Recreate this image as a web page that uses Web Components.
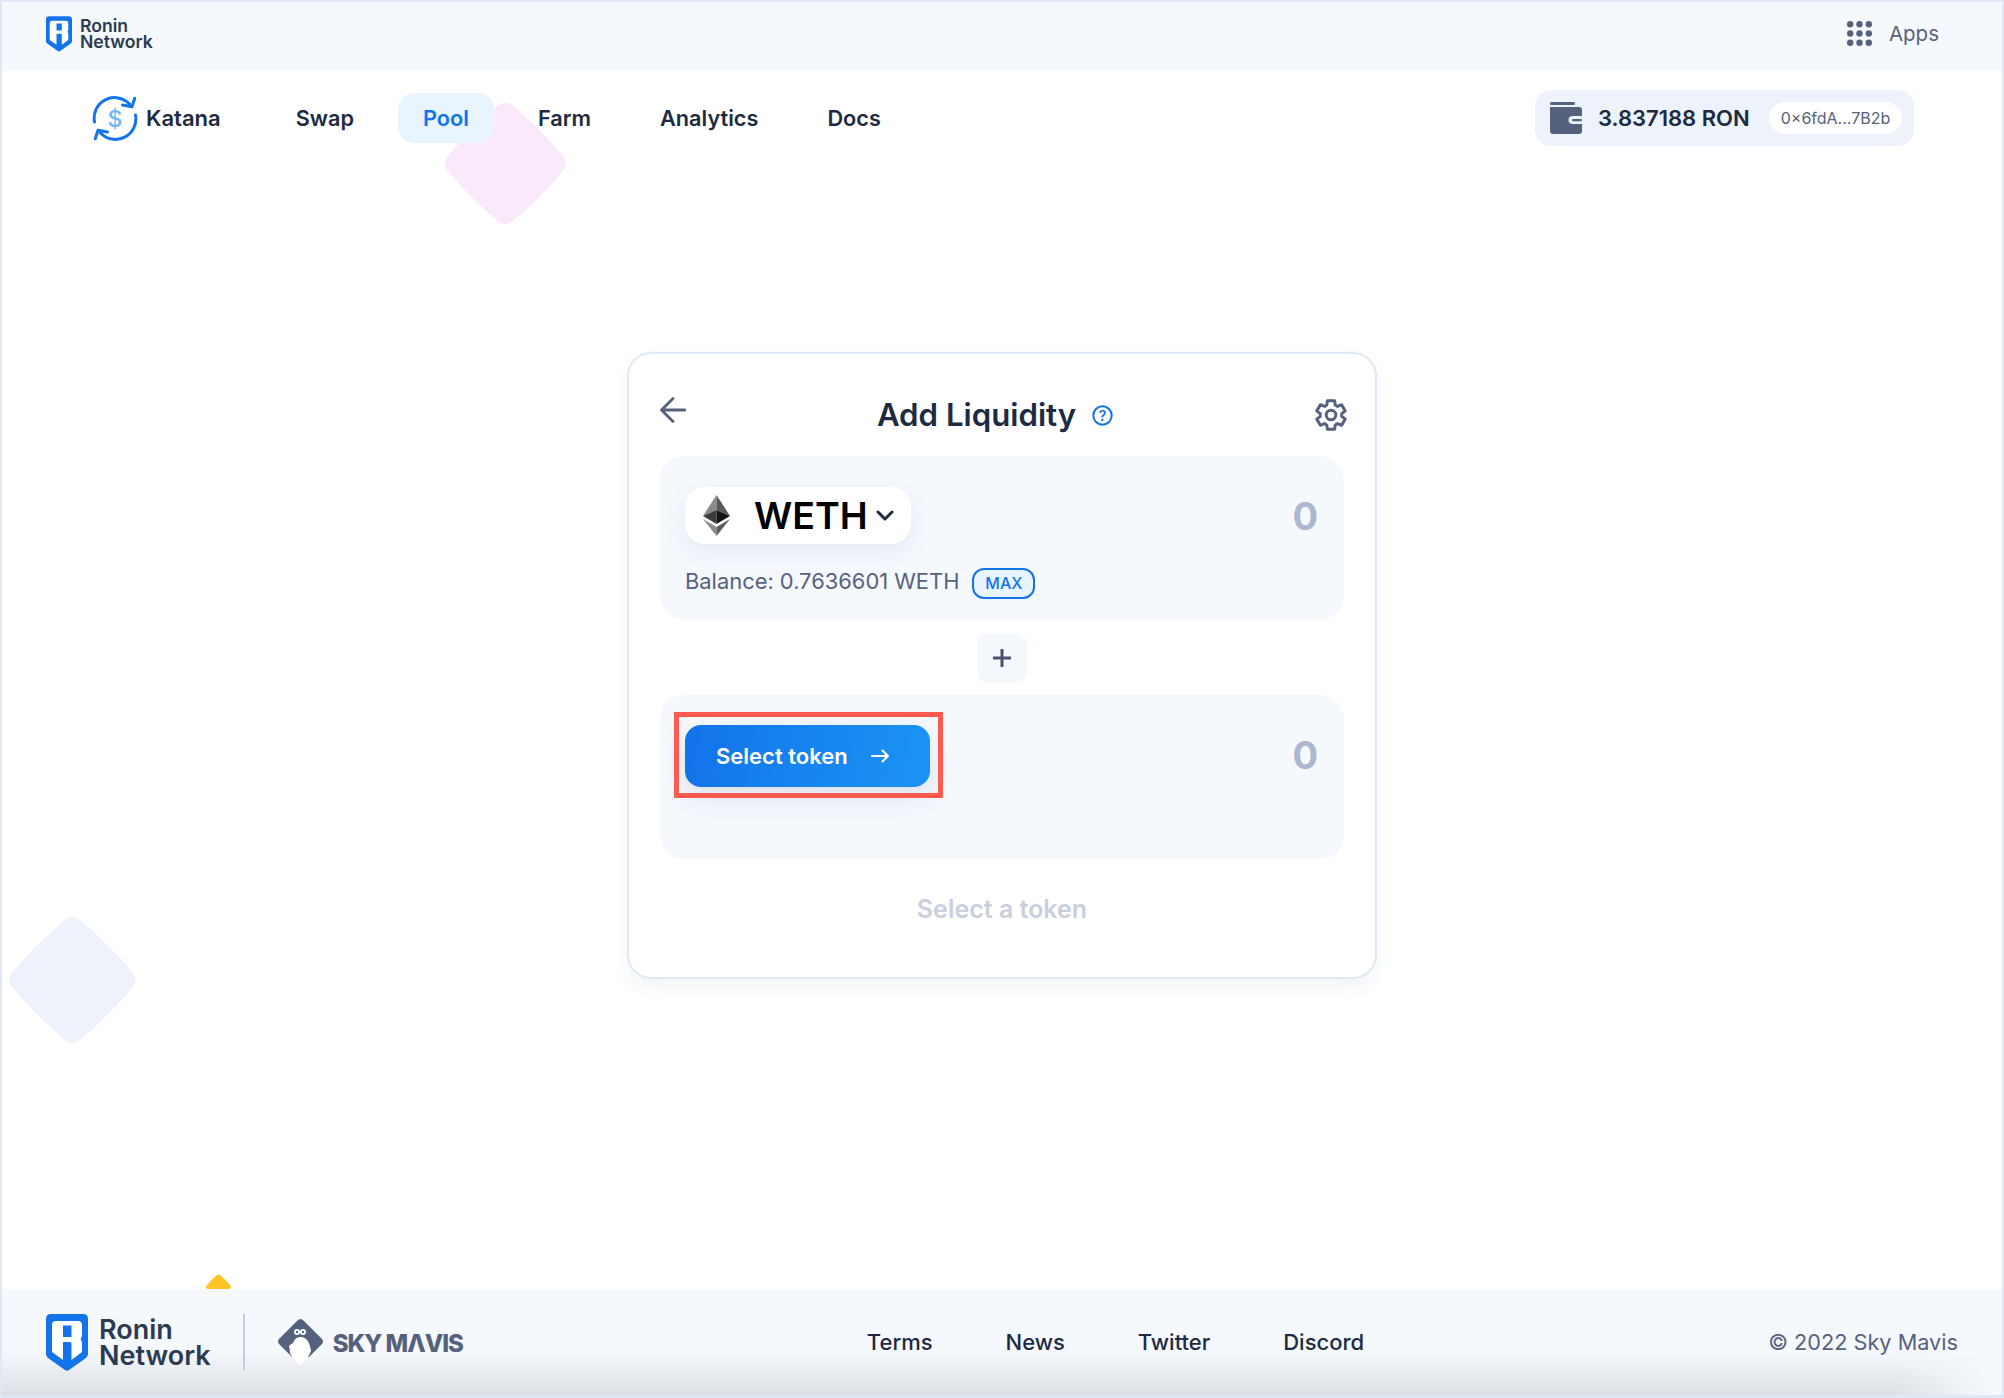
<!DOCTYPE html>
<html lang="en">
<head>
<meta charset="utf-8">
<title>Katana - Add Liquidity</title>
<style>
  html, body { margin: 0; padding: 0; background: #fff; }
  body { font-family: Inter, "Noto Sans", sans-serif; }
</style>
</head>
<body>
<app-frame>
  <top-bar></top-bar>
  <main-nav>
    <nav-link>Swap</nav-link>
    <nav-link active>Pool</nav-link>
    <nav-link>Farm</nav-link>
    <nav-link>Analytics</nav-link>
    <nav-link>Docs</nav-link>
  </main-nav>
  <liquidity-card></liquidity-card>
  <site-footer></site-footer>
</app-frame>

<script>
// Shared markup for the shield logo
const SHIELD = `
  <svg viewBox="0 0 42 57" width="100%" height="100%" style="display:block">
    <path fill="#1273ea" d="M5 0H37Q42 0 42 5V40Q42 42.5 40 44L23 56Q21 57.5 19 56L2 44Q0 42.5 0 40V5Q0 0 5 0Z"/>
    <path fill="#fff" fill-rule="evenodd" d="M10 7H32Q36 7 36 11V21Q36 23.5 34.5 25Q36 26.5 36 29V38L25.5 46V29.5Q25.5 28 24 28H17V46L6 38V11Q6 7 10 7ZM17 11.5V23H25.5V11.5Z"/>
  </svg>`;

// Six-toothed gear outline, teeth on top and bottom
function gearPath() {
  const point = (r, deg) => {
    const a = deg * Math.PI / 180;
    return (16 + r * Math.cos(a)).toFixed(2) + ' ' + (16 + r * Math.sin(a)).toFixed(2);
  };
  let d = '';
  for (let k = 0; k < 6; k++) {
    const c = k * 60 - 90;
    d += (k ? 'L' : 'M') + point(14.8, c - 14) + 'L' + point(14.8, c + 14) + 'L' + point(10.8, c + 23) + 'L' + point(10.8, c + 37);
  }
  return d + 'Z';
}

class AppFrame extends HTMLElement {
  constructor() {
    super();
    this.attachShadow({ mode: 'open' });
    this.shadowRoot.innerHTML = `
      <style>
        :host {
          display: flex;
          flex-direction: column;
          position: relative;
          box-sizing: border-box;
          width: 2004px;
          height: 1398px;
          overflow: hidden;
          background: #fff;
          border: 2px solid #dfe9f5;
          border-bottom-width: 3px;
        }
        svg { position: absolute; z-index: 0; }
        ::slotted(*) { position: relative; z-index: 1; }
      </style>
      <!-- background shapes -->
      <svg style="left:441px;top:101px" width="125" height="121" viewBox="0 0 100 100"><path fill="#f9e9fb" d="${AppFrame.DIAMOND}"/></svg>
      <svg style="left:6px;top:915px" width="129" height="126" viewBox="0 0 100 100"><path fill="#edf2fb" d="${AppFrame.DIAMOND}"/></svg>
      <svg style="left:204px;top:1272px" width="25" height="26" viewBox="0 0 100 100"><path fill="#ffc528" d="${AppFrame.DIAMOND}"/></svg>
      <slot></slot>
    `;
  }
}
AppFrame.DIAMOND = 'M50 0C53 0 55 1.5 58 4C72 16 84 28 96 42C99 45.5 100 48 100 50C100 52 99 54.5 96 58C84 72 72 84 58 96C55 98.5 53 100 50 100C47 100 45 98.5 42 96C28 84 16 72 4 58C1 54.5 0 52 0 50C0 48 1 45.5 4 42C16 28 28 16 42 4C45 1.5 47 0 50 0Z';
customElements.define('app-frame', AppFrame);

class TopBar extends HTMLElement {
  constructor() {
    super();
    this.attachShadow({ mode: 'open' });
    this.shadowRoot.innerHTML = `
      <style>
        :host {
          display: flex;
          align-items: center;
          justify-content: space-between;
          flex: none;
          box-sizing: border-box;
          height: 69px;
          padding: 0 63px 6px 44px;
          background: #f5f8fd;
        }
        .logo { display: flex; align-items: center; gap: 8px; }
        .shield { width: 26px; height: 36px; }
        .name { font: 600 17.6px/16px Inter, sans-serif; color: #2c3a52; }
        .apps { display: flex; align-items: center; gap: 17px; font: 400 20.5px/28px Inter, sans-serif; color: #56627d; }
        svg.grid { display: block; }
      </style>
      <div class="logo">
        <div class="shield">${SHIELD}</div>
        <div class="name">Ronin<br>Network</div>
      </div>
      <div class="apps">
        <svg class="grid" width="25" height="25" viewBox="0 0 25 25" fill="#56627d">
          <circle cx="3.2" cy="3.2" r="3.2"/><circle cx="12.5" cy="3.2" r="3.2"/><circle cx="21.8" cy="3.2" r="3.2"/>
          <circle cx="3.2" cy="12.5" r="3.2"/><circle cx="12.5" cy="12.5" r="3.2"/><circle cx="21.8" cy="12.5" r="3.2"/>
          <circle cx="3.2" cy="21.8" r="3.2"/><circle cx="12.5" cy="21.8" r="3.2"/><circle cx="21.8" cy="21.8" r="3.2"/>
        </svg>
        <span>Apps</span>
      </div>
    `;
  }
}
customElements.define('top-bar', TopBar);

class NavLink extends HTMLElement {
  constructor() {
    super();
    this.attachShadow({ mode: 'open' });
    this.shadowRoot.innerHTML = `
      <style>
        :host {
          display: flex;
          align-items: center;
          height: 50px;
          padding: 0 25px;
          border-radius: 16px;
          font: 600 21.7px/28px Inter, sans-serif;
          color: #1c2a42;
        }
        :host([active]) { background: #e8f4ff; color: #1273ea; }
      </style>
      <slot></slot>
    `;
  }
}
customElements.define('nav-link', NavLink);

class MainNav extends HTMLElement {
  constructor() {
    super();
    this.attachShadow({ mode: 'open' });
    this.shadowRoot.innerHTML = `
      <style>
        :host {
          display: flex;
          align-items: center;
          flex: none;
          height: 56px;
          margin-top: 19px;
          padding: 0 88px 0 90px;
        }
        .brand {
          display: flex;
          align-items: center;
          gap: 8px;
          margin-right: 50px;
          font: 600 22px/28px Inter, sans-serif;
          color: #1c2a42;
        }
        .links { display: flex; gap: 19px; flex: 1; }
        .wallet {
          display: flex;
          align-items: center;
          width: 379px;
          height: 56px;
          box-sizing: border-box;
          padding: 0 12px 0 15px;
          background: #edf2fb;
          border-radius: 16px;
          font: 600 22px/30px Inter, sans-serif;
          color: #1c2a42;
        }
        .ron { margin-left: 16px; flex: 1; }
        .addr {
          display: flex;
          align-items: center;
          justify-content: center;
          width: 133px;
          height: 32px;
          background: #fff;
          border-radius: 16px;
          font: 400 16px/20px Inter, sans-serif;
          color: #56627d;
        }
        svg { display: block; flex: none; }
      </style>
      <div class="brand">
        <svg width="46" height="45" viewBox="0 0 46 45" fill="none">
          <path d="M2.5 26A20.5 20.5 0 0 1 37.5 8" stroke="#1273ea" stroke-width="3" stroke-linecap="round"/>
          <path d="M42.7 2.3L40 10.7L30.5 9" stroke="#1273ea" stroke-width="3" stroke-linecap="round" stroke-linejoin="round"/>
          <path d="M43.5 19A20.5 20.5 0 0 1 8.5 37" stroke="#1273ea" stroke-width="3" stroke-linecap="round"/>
          <path d="M3.3 42.7L6 34.3L15.5 36" stroke="#1273ea" stroke-width="3" stroke-linecap="round" stroke-linejoin="round"/>
          <text x="23" y="30.5" text-anchor="middle" font-family="Inter, sans-serif" font-size="23" font-weight="500" fill="#6bb8fa">$</text>
        </svg>
        <span>Katana</span>
      </div>
      <div class="links"><slot></slot></div>
      <div class="wallet">
        <svg width="32" height="32" viewBox="0 0 32 32">
          <rect x="0" y="0" width="25" height="3" rx="1.5" fill="#56627d"/>
          <path fill="#56627d" d="M0 5H29Q32 5 32 8V14H23Q18.5 14 18.5 18Q18.5 22 23 22H32V29Q32 32 29 32H3Q0 32 0 29Z"/>
          <rect x="22" y="17" width="10" height="2.2" rx="1.1" fill="#56627d"/>
        </svg>
        <span class="ron">3.837188 RON</span>
        <span class="addr">0×6fdA...7B2b</span>
      </div>
    `;
  }
}
customElements.define('main-nav', MainNav);

class TokenPanel extends HTMLElement {
  constructor() {
    super();
    this.attachShadow({ mode: 'open' });
    this.shadowRoot.innerHTML = `
      <style>
        :host {
          display: block;
          box-sizing: border-box;
          height: 164px;
          padding: 31px 25px 0;
          background: #f5f8fd;
          border-radius: 24px;
        }
        .row { display: flex; align-items: flex-start; justify-content: space-between; }
        .amount { font: 700 38px/58px Inter, sans-serif; color: #adb8d0; margin-right: 1px; }
      </style>
      <div class="row">
        <slot></slot>
        <div class="amount">0</div>
      </div>
      <slot name="below"></slot>
    `;
  }
}
customElements.define('token-panel', TokenPanel);

class TokenSelect extends HTMLElement {
  constructor() {
    super();
    this.attachShadow({ mode: 'open' });
    this.shadowRoot.innerHTML = `
      <style>
        :host {
          display: flex;
          align-items: center;
          box-sizing: border-box;
          width: 226px;
          height: 57px;
          padding-left: 18px;
          background: #fff;
          border-radius: 20px;
          box-shadow: 0 8px 20px rgba(90, 110, 160, 0.1);
          font: 600 37.5px/48px Inter, sans-serif;
          color: #000;
        }
        .name { margin-left: 24px; }
        svg { display: block; flex: none; }
        .chev { margin-left: 8px; }
      </style>
      <svg width="27" height="41" viewBox="0 0 27 41">
        <path fill="#8a8a8a" d="M13.5 0V15L0 21Z"/>
        <path fill="#5a5a5a" d="M13.5 0V15L27 21Z"/>
        <path fill="#3c3c3c" d="M13.5 15V29L0 21Z"/>
        <path fill="#151515" d="M13.5 15V29L27 21Z"/>
        <path fill="#8c8c8c" d="M0 24L13.5 32V41Z"/>
        <path fill="#5e5e5e" d="M27 24L13.5 32V41Z"/>
      </svg>
      <span class="name">WETH</span>
      <svg class="chev" width="18" height="11" viewBox="0 0 18 11" fill="none">
        <path d="M2 2L9 9L16 2" stroke="#1c2a42" stroke-width="3" stroke-linecap="round" stroke-linejoin="round"/>
      </svg>
    `;
  }
}
customElements.define('token-select', TokenSelect);

class BalanceLine extends HTMLElement {
  constructor() {
    super();
    this.attachShadow({ mode: 'open' });
    this.shadowRoot.innerHTML = `
      <style>
        :host {
          display: flex;
          align-items: center;
          gap: 13px;
          margin-top: 21px;
          font: 400 21.9px/30px Inter, sans-serif;
          color: #56627d;
        }
        .bal { margin-bottom: 5px; }
        .max {
          display: flex;
          align-items: center;
          justify-content: center;
          box-sizing: border-box;
          width: 63px;
          height: 31px;
          padding-bottom: 1px;
          background: #e8f4ff;
          border: 2px solid #1273ea;
          border-radius: 12px;
          font: 500 16px/20px Inter, sans-serif;
          color: #1273ea;
        }
      </style>
      <span class="bal">Balance: 0.7636601 WETH</span>
      <span class="max">MAX</span>
    `;
  }
}
customElements.define('balance-line', BalanceLine);

class SelectButton extends HTMLElement {
  constructor() {
    super();
    this.attachShadow({ mode: 'open' });
    this.shadowRoot.innerHTML = `
      <style>
        :host {
          display: flex;
          align-items: center;
          position: relative;
          box-sizing: border-box;
          width: 245px;
          height: 62px;
          margin-top: -1px;
          padding-left: 31px;
          gap: 23px;
          background: linear-gradient(100deg, #1273ea, #1c94f4);
          border-radius: 16px;
          box-shadow: 0 10px 24px rgba(90, 110, 160, 0.16);
          font: 600 22px/28px Inter, sans-serif;
          color: #fff;
        }
        svg { display: block; }
        /* red annotation box over the button */
        .mark {
          position: absolute;
          left: -11px;
          right: -13px;
          top: -13px;
          bottom: -11px;
          border: 5px solid #ff5a4f;
          pointer-events: none;
        }
      </style>
      <span>Select token</span>
      <svg width="18" height="14" viewBox="0 0 18 14" fill="none">
        <path d="M1 7H17M11.5 1.5L17 7L11.5 12.5" stroke="#fff" stroke-width="2" stroke-linecap="round" stroke-linejoin="round"/>
      </svg>
      <div class="mark"></div>
    `;
  }
}
customElements.define('select-button', SelectButton);

class LiquidityCard extends HTMLElement {
  constructor() {
    super();
    this.attachShadow({ mode: 'open' });
    this.shadowRoot.innerHTML = `
      <style>
        :host {
          display: block;
          box-sizing: border-box;
          width: 750px;
          height: 627px;
          margin: 206px auto 0;
          padding: 29px 31px 0;
          background: #fff;
          border: 2px solid #dfe9f5;
          border-radius: 24px;
          box-shadow: 0 8px 16px rgba(120, 150, 200, 0.1);
        }
        .head {
          display: grid;
          grid-template-columns: 1fr auto 1fr;
          align-items: center;
          height: 64px;
          margin-bottom: 9px;
        }
        .back { display: block; margin-bottom: 10px; }
        .title {
          display: flex;
          align-items: center;
          gap: 16px;
          margin-right: 14px;
          font: 600 31.2px/40px Inter, sans-serif;
          color: #1c2a42;
        }
        .gear { display: block; justify-self: end; margin-right: -3px; }
        .plus {
          display: flex;
          align-items: center;
          justify-content: center;
          width: 50px;
          height: 50px;
          margin: 13px auto 12px;
          background: #f5f8fd;
          border-radius: 12px;
        }
        .hint {
          margin-top: 34px;
          text-align: center;
          font: 600 25px/32px Inter, sans-serif;
          color: #c9cfdd;
        }
        svg { flex: none; }
      </style>
      <div class="head">
        <svg class="back" width="26" height="26" viewBox="0 0 26 26" fill="none">
          <path d="M25 13H2M13 1.5L1.500 13L13 24.5" stroke="#56627d" stroke-width="2.8" stroke-linecap="round" stroke-linejoin="round"/>
        </svg>
        <div class="title">
          <span>Add Liquidity</span>
          <svg width="21" height="21" viewBox="0 0 21 21" fill="none">
            <circle cx="10.5" cy="10.5" r="9.2" stroke="#1273ea" stroke-width="2"/>
            <text x="10.5" y="15.5" text-anchor="middle" font-family="Inter, sans-serif" font-size="14" font-weight="600" fill="#1273ea">?</text>
          </svg>
        </div>
        <svg class="gear" width="32" height="32" viewBox="0 0 32 32" fill="none" stroke="#56627d" stroke-width="3" stroke-linejoin="round">
          <circle cx="16" cy="16" r="4.8"/>
          <path d="${gearPath()}"/>
        </svg>
      </div>
      <token-panel>
        <token-select></token-select>
        <balance-line slot="below"></balance-line>
      </token-panel>
      <div class="plus">
        <svg width="18" height="18" viewBox="0 0 18 18" fill="none">
          <path d="M9 1V17M1 9H17" stroke="#46526d" stroke-width="3" stroke-linecap="round"/>
        </svg>
      </div>
      <token-panel>
        <select-button></select-button>
      </token-panel>
      <div class="hint">Select a token</div>
    `;
  }
}
customElements.define('liquidity-card', LiquidityCard);

class SiteFooter extends HTMLElement {
  constructor() {
    super();
    this.attachShadow({ mode: 'open' });
    this.shadowRoot.innerHTML = `
      <style>
        :host {
          display: flex;
          align-items: center;
          justify-content: space-between;
          position: relative;
          box-sizing: border-box;
          flex: none;
          height: 106px;
          margin-top: auto;
          padding: 0 44px;
          background: #f5f8fd;
        }
        /* grey fade along the bottom edge */
        :host::after {
          content: '';
          position: absolute;
          left: 0;
          right: 0;
          bottom: 0;
          height: 44px;
          background: linear-gradient(180deg, rgba(220, 223, 228, 0), #dcdfe4);
          -webkit-mask-image: linear-gradient(90deg, #000 1890px, transparent 1990px);
          mask-image: linear-gradient(90deg, #000 1890px, transparent 1990px);
        }
        .brand { display: flex; align-items: center; position: relative; z-index: 1; }
        .shield { width: 42px; height: 57px; }
        .name { margin-left: 11px; padding-top: 2px; font: 600 27px/26px Inter, sans-serif; color: #2c3a52; }
        .sep { width: 2px; height: 56px; margin: 0 32px; background: #c4cede; }
        .sky { display: block; margin-right: 9px; }
        .mavis { margin-top: 3px; font: 800 24px/30px Inter, sans-serif; letter-spacing: -1px; color: #56627d; }
        .links { display: flex; gap: 73px; position: relative; z-index: 1; font: 500 22px/28px Inter, sans-serif; color: #1c2a42; }
        .copy { position: relative; z-index: 1; font: 400 21.7px/28px Inter, sans-serif; color: #56627d; }
      </style>
      <div class="brand">
        <div class="shield">${SHIELD}</div>
        <div class="name">Ronin<br>Network</div>
        <div class="sep"></div>
        <svg class="sky" width="47" height="46" viewBox="0 0 47 46">
          <path fill="#56627d" d="M23.5 0Q25 0 27 2L45 20Q47 22.5 45 25L32 38H15L2 25Q0 22.5 2 20L20 2Q22 0 23.5 0Z"/>
          <path fill="#fff" d="M23.5 18C30 18 33 24 34 32Q31 40 23.5 46Q16 41 13 34Q13 30 12 27Q14 25 16 24Q18 18 23.5 18Z"/>
          <circle cx="20" cy="13" r="3" fill="#fff"/><circle cx="26" cy="13" r="3" fill="#fff"/>
          <circle cx="20" cy="13" r="1.2" fill="#56627d"/><circle cx="26" cy="13" r="1.2" fill="#56627d"/>
        </svg>
        <span class="mavis">SKY MΛVIS</span>
      </div>
      <div class="links"><span>Terms</span><span>News</span><span>Twitter</span><span>Discord</span></div>
      <div class="copy">© 2022 Sky Mavis</div>
    `;
  }
}
customElements.define('site-footer', SiteFooter);
</script>
</body>
</html>
